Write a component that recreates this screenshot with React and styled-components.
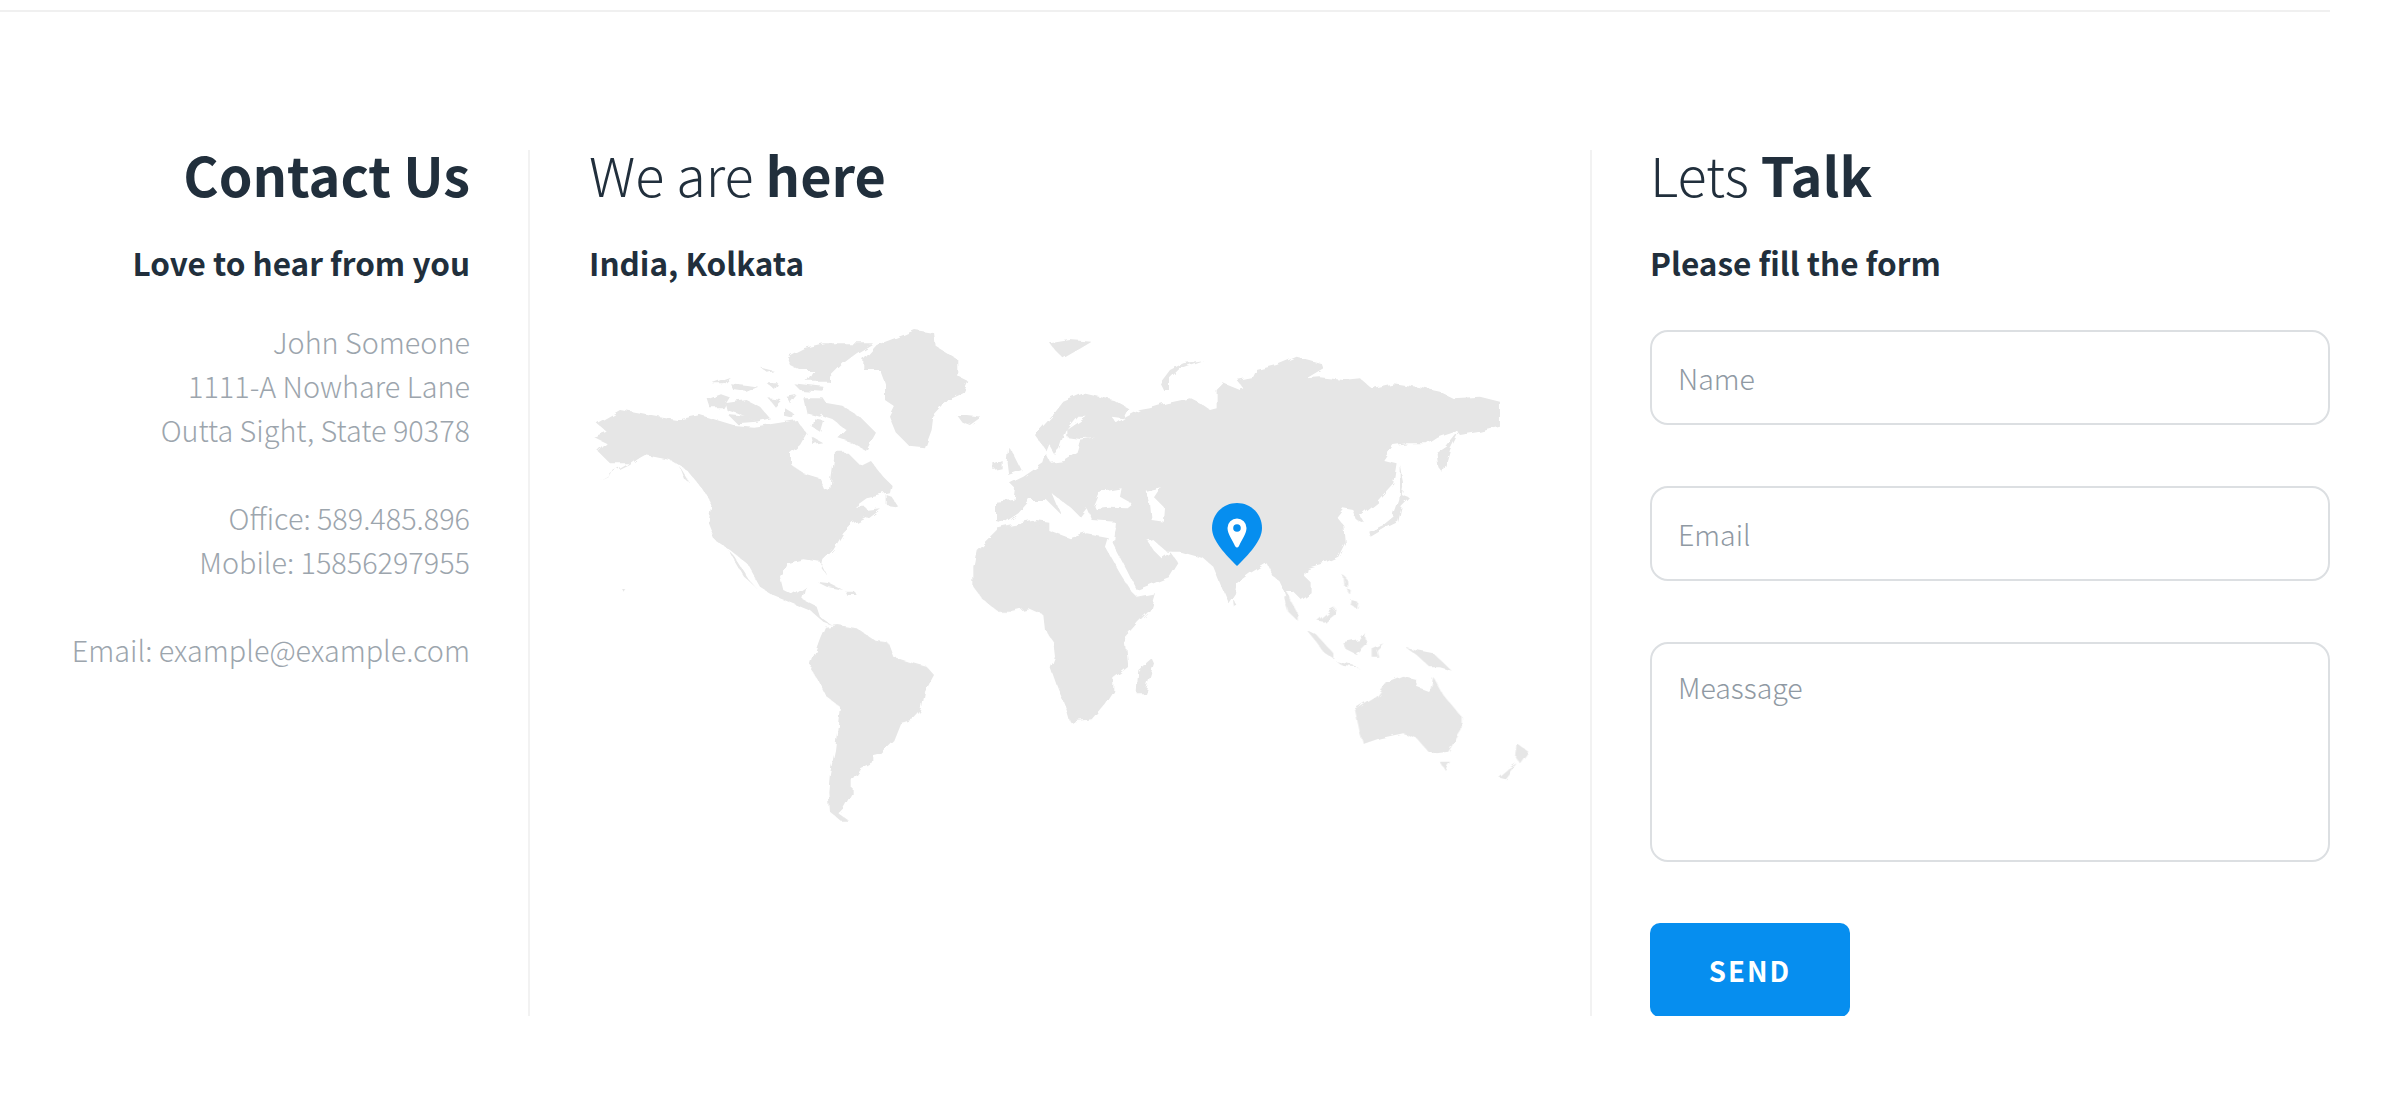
import styled, { createGlobalStyle } from "styled-components";

const GlobalStyle = createGlobalStyle`
    html, body {
        margin: 0;
        background: #fff;
    }
    body {
        font-family: "Noto Sans CJK JP", "Noto Sans", sans-serif;
        color: #212f3c;
    }
`

// land shapes, each group is traced on its own 3x crop of the map
const westLand = [
    "20,310 90,270 200,290 260,300 330,285 430,315 490,320 560,310 620,300 650,340 630,375 600,400 600,430 640,460 690,475 705,510 720,515 725,470 735,395 770,395 810,435 840,420 880,470 905,495 900,520 830,535 795,560 825,560 840,585 790,610 760,640 730,690 700,720 695,745 710,765 690,725 640,718 590,730 570,770 580,810 610,825 650,800 640,840 680,860 690,890 725,915 700,905 660,870 600,845 550,825 510,800 470,730 420,690 375,660 355,610 365,550 340,510 290,450 240,420 165,405 120,430 60,430 25,395 50,370 10,350 50,335",
    "415,690 432,708 478,780 500,805 462,770",
    "30,480 100,440 160,405 120,435 60,465",
    "270,440 300,490 285,480",
    "700,250 760,260 810,290 855,335 825,390 780,365 745,355 770,330 730,300 700,290 690,265",
    "350,235 390,220 420,230 400,265 360,265",
    "405,250 470,240 510,260 540,295 500,305 440,280 410,270",
    "415,285 470,290 500,305 440,310",
    "365,190 420,170 400,190",
    "420,190 470,195 505,200 470,215 430,210",
    "530,190 565,190 555,210",
    "610,190 700,200 700,215 630,210",
    "590,110 640,85 700,70 850,70 800,100 760,130 720,170 720,185 650,185 670,150 630,150 600,135",
    "510,140 550,150 530,155",
    "535,235 575,240 555,260",
    "590,230 620,225 600,250",
    "640,235 700,235 720,265 690,290 650,280",
    "585,265 610,280 605,295 585,290",
    "670,295 700,300 690,335 665,320",
    "665,350 700,370 670,375",
    "820,120 860,75 940,45 975,30 1035,40 1040,80 1105,120 1105,170 1135,185 1120,220 1075,240 1030,290 1025,330 1005,385 960,380 920,340 900,290 915,260 885,240 885,190 870,150 820,150",
    "1100,285 1130,285 1175,290 1140,315 1115,305",
    "890,525 905,530 925,560 890,555",
    "825,570 870,565 830,595",
    "680,785 720,790 760,810 710,800",
    "765,815 795,815 800,825 770,825",
    "98,808 108,810 104,818",
]

const southLand = [
    "120,235 135,200 175,195 230,205 290,245 325,250 340,290 385,305 440,320 462,345 435,395 425,450 400,478 360,490 340,540 300,580 280,585 280,605 240,625 215,660 215,700 190,745 175,760 210,785 185,785 150,755 145,695 150,640 165,570 180,440 140,410 115,360 90,325 100,290",
    "580,20 590,-30 655,-95 700,-105 770,-120 805,-115 870,-100 990,-90 975,-40 1020,40 1055,95 1070,110 1125,100 1110,150 1075,185 1035,230 1040,270 1045,320 1000,355 1000,390 975,430 935,478 870,485 860,450 830,375 812,325 825,290 820,245 795,210 790,165 745,145 700,155 655,155 610,120 580,80",
    "1115,295 1122,310 1095,400 1070,400 1075,330",
]

const eastLand = [
    "45,545 100,540 105,505 90,490 130,470 190,430 200,395 165,345 215,290 250,245 310,220 400,240 445,265 430,295 395,290 410,310 440,290 480,270 510,265 560,250 630,235 660,250 690,270 710,265 710,210 730,190 780,210 790,205 770,180 820,170 830,150 890,135 950,110 1025,130 1030,145 980,175 1020,172 1090,180 1140,175 1175,205 1240,190 1310,200 1380,215 1420,235 1500,230 1560,245 1560,320 1500,335 1440,345 1430,330 1370,350 1340,370 1280,370 1240,375 1210,420 1250,430 1240,490 1190,545 1140,585 1155,610 1130,600 1120,570 1090,565 1070,590 1090,615 1095,670 1075,710 1030,730 980,745 975,770 995,790 995,820 965,840 935,810 915,810 950,895 935,880 905,800 895,780 880,770 860,730 810,760 770,790 765,820 745,850 720,790 700,740 670,715 600,695 570,695 595,730 570,770 470,810 440,750 395,665 405,620 205,620 65,605 45,600",
    "1262,435 1272,490 1265,525 1290,535 1265,560 1255,605 1215,625 1172,650 1168,635 1210,615 1240,590 1258,540 1262,490",
    "1370,400 1400,380 1440,330 1410,390 1390,460 1375,440",
    "210,70 270,60 335,65 310,80 250,115 225,90",
    "540,190 570,150 610,130 670,120 600,145 570,175 570,210 550,210",
    "85,380 105,410 125,450 85,465 80,425",
    "40,430 65,420 65,445 40,450",
    "762,840 775,860 765,865",
]

// seas cut back out of the land
const eastSeas = [
    "70,610 115,580 150,540 200,540 240,580 215,520 280,570 300,590 320,565 335,600 405,605 400,655 320,640 270,655 205,630 205,605 170,600 100,615",
    "340,555 355,520 395,510 425,505 420,530 455,550 440,562 385,560 345,565",
    "500,515 545,505 525,535 555,565 552,605 515,600 510,550",
    "505,665 520,660 560,695 575,695 545,715 525,695",
    "195,395 210,425 250,420 290,395 300,362 350,355 305,358 262,352 262,330 320,290 295,290 258,335 240,390 225,405 205,370",
]

const islandLand = [
    "320,270 350,285 400,340 400,355 370,335 340,295",
    "405,360 440,370 475,382 430,378",
    "430,310 480,300 495,280 500,315 470,345 440,330",
    "515,325 550,310 530,330 535,350 515,350",
    "615,320 650,330 700,340 730,368 755,392 720,382 690,382 650,345",
    "428,105 438,112 440,140 430,135",
    "440,145 452,150 450,165",
    "455,180 472,185 468,205 452,195",
    "255,150 290,215 290,240 265,215 250,170",
    "352,242 385,215 408,205 400,222 372,245",
    "465,510 530,470 560,430 610,410 650,420 650,440 690,455 700,410 730,465 785,530 785,570 745,635 710,640 680,630 650,595 610,580 540,595 490,612 480,580",
    "720,665 750,665 735,690",
    "950,610 985,635 960,670 945,650",
    "950,670 915,715 895,710 925,685",
]

function WorldMap() {
    return (
        <MapBox>
            <svg viewBox="589 325 950 505" width="950" height="505">
                <defs>
                    <filter id="coast" x="589" y="325" width="950" height="505" filterUnits="userSpaceOnUse">
                        <feTurbulence type="fractalNoise" baseFrequency="0.09" numOctaves="2" seed="4" />
                        <feDisplacementMap in="SourceGraphic" scale="7" />
                        <feGaussianBlur stdDeviation="0.6" />
                    </filter>
                </defs>
                <g filter="url(#coast)">
                    <g transform="translate(590 320) scale(.3333)" fill="#e6e6e6">
                        {westLand.map(item => <polygon key={item} points={item} />)}
                    </g>
                    <g transform="translate(780 560) scale(.3333)" fill="#e6e6e6">
                        {southLand.map(item => <polygon key={item} points={item} />)}
                    </g>
                    <g transform="translate(980 320) scale(.3333)" fill="#e6e6e6">
                        {eastLand.map(item => <polygon key={item} points={item} />)}
                    </g>
                    <g transform="translate(980 320) scale(.3333)" fill="#fff">
                        {eastSeas.map(item => <polygon key={item} points={item} />)}
                    </g>
                    <g transform="translate(1200 540) scale(.3333)" fill="#e6e6e6">
                        {islandLand.map(item => <polygon key={item} points={item} />)}
                    </g>
                </g>
            </svg>
            <Pin viewBox="0 0 50 63" width="50" height="63">
                <path fill="#068eef" d="M25 0C11 0 0 11 0 25C0 38 14 52 25 63C36 52 50 38 50 25C50 11 39 0 25 0Z" />
                <path fill="#fff" d="M25 15.5a9.5 9.5 0 0 0-9.5 9.5c0 6 5 12 7.5 18q2 3 4 0c2.5-6 7.5-12 7.5-18a9.5 9.5 0 0 0-9.5-9.5z" />
                <circle fill="#068eef" cx="25" cy="25" r="3.8" />
            </Pin>
        </MapBox>
    )
}

export default function App() {
    return (
        <>
            <GlobalStyle />
            <Page>
                <TopRule />
                <Columns>
                    <ContactColumn>
                        <Title><b>Contact Us</b></Title>
                        <Subtitle>Love to hear from you</Subtitle>
                        <Address>
                            John Someone<br />
                            1111-A Nowhare Lane<br />
                            Outta Sight, State 90378<br />
                            <br />
                            Office: 589.485.896<br />
                            Mobile: 15856297955<br />
                            <br />
                            Email: example@example.com
                        </Address>
                    </ContactColumn>
                    <MapColumn>
                        <Title>We are <b>here</b></Title>
                        <Subtitle>India, Kolkata</Subtitle>
                        <WorldMap />
                    </MapColumn>
                    <FormColumn>
                        <Title>Lets <b>Talk</b></Title>
                        <Subtitle>Please fill the form</Subtitle>
                        <Form>
                            <Field placeholder="Name" />
                            <Field placeholder="Email" />
                            <MessageField placeholder="Meassage" />
                            <SendButton type="button">SEND</SendButton>
                        </Form>
                    </FormColumn>
                </Columns>
            </Page>
        </>
    )
}

const Page = styled.div`
    width: 2330px;
    padding-top: 10px;
`

const TopRule = styled.div`
    height: 2px;
    background: #f0f0f0;
`

const Columns = styled.div`
    display: grid;
    grid-template-columns: 530px 1062px 738px;
    margin-top: 138px;
    height: 866px;
`

const Column = styled.div`
    min-width: 0;
`

const ContactColumn = styled(Column)`
    padding-right: 58px;
    text-align: right;
    border-right: 2px solid #f2f2f2;
`

const MapColumn = styled(Column)`
    padding-left: 59px;
    border-right: 2px solid #f2f2f2;
`

const FormColumn = styled(Column)`
    padding-left: 58px;
`

const Title = styled.h2`
    margin: 0;
    font-size: 54px;
    line-height: 48px;
    font-weight: 300;
    color: #212f3c;

    b {
        font-weight: 700;
    }
`

const Subtitle = styled.h4`
    margin: 42px 0 0;
    font-size: 31.5px;
    line-height: 44px;
    font-weight: 700;
    color: #212f3c;
`

const Address = styled.p`
    margin: 35.5px 0 0;
    font-size: 28.8px;
    line-height: 44px;
    font-weight: 300;
    color: #9ca5ad;
`

const MapBox = styled.div`
    position: relative;
    margin-top: 41px;
    width: 950px;
    height: 505px;

    svg {
        display: block;
    }
`

const Pin = styled.svg`
    position: absolute;
    left: 623px;
    top: 178px;
`

const Form = styled.form`
    display: flex;
    flex-direction: column;
    align-items: flex-start;
    gap: 61px;
    margin-top: 46px;
`

const Field = styled.input`
    box-sizing: border-box;
    width: 100%;
    height: 95px;
    padding: 0 26px;
    border: 2px solid #dcdfe2;
    border-radius: 18px;
    background: #fff;
    outline: none;
    font-family: inherit;
    font-size: 28.5px;
    font-weight: 300;

    &::placeholder {
        color: #8f99a3;
        opacity: 1;
    }
`

const MessageField = styled.textarea`
    box-sizing: border-box;
    display: block;
    width: 100%;
    height: 220px;
    padding: 26px;
    border: 2px solid #dcdfe2;
    border-radius: 18px;
    background: #fff;
    outline: none;
    resize: none;
    font-family: inherit;
    font-size: 28.5px;
    line-height: 34px;
    font-weight: 300;

    &::placeholder {
        color: #8f99a3;
        opacity: 1;
    }
`

const SendButton = styled.button`
    width: 200px;
    height: 94px;
    border: none;
    border-radius: 10px;
    background: #068eef;
    color: #fff;
    font-family: inherit;
    font-size: 27.5px;
    font-weight: 700;
    letter-spacing: 2px;
`
